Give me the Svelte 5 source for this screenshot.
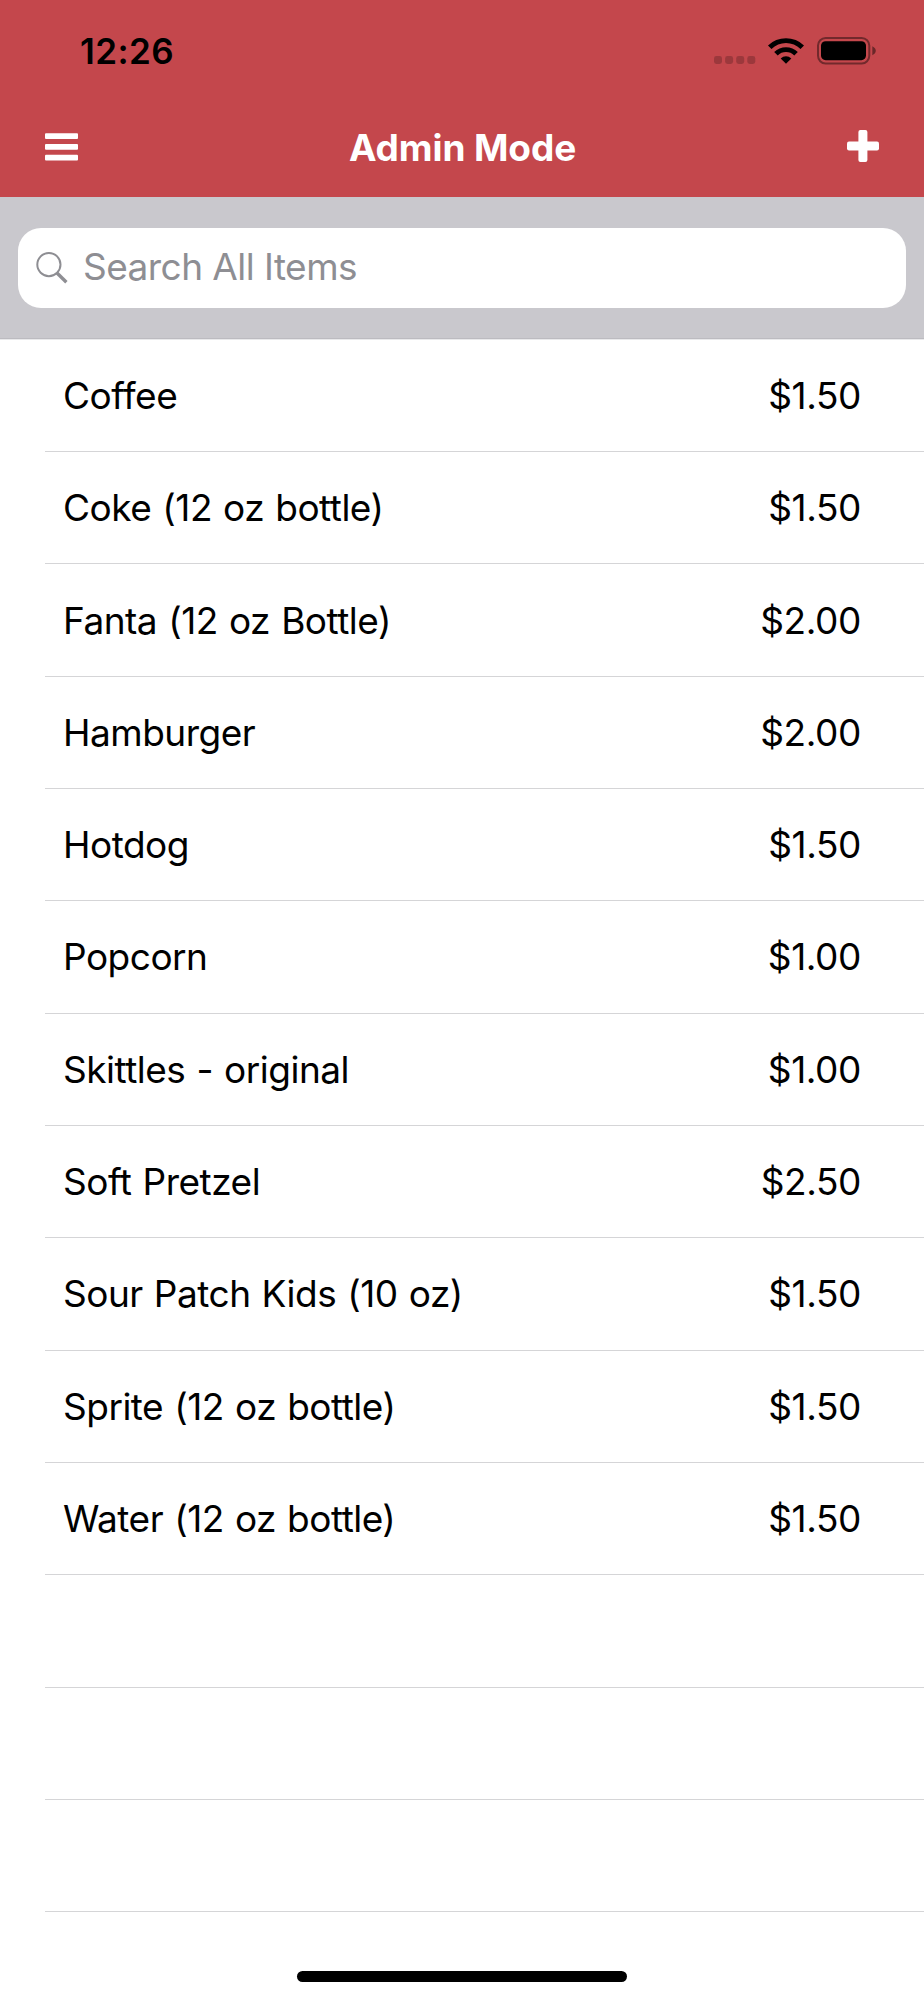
<script lang="ts">
  interface Item {
    name: string;
    price: number;
  }

  const items: Item[] = [
    { name: "Coffee", price: 1.5 },
    { name: "Coke (12 oz bottle)", price: 1.5 },
    { name: "Fanta (12 oz Bottle)", price: 2 },
    { name: "Hamburger", price: 2 },
    { name: "Hotdog", price: 1.5 },
    { name: "Popcorn", price: 1 },
    { name: "Skittles - original", price: 1 },
    { name: "Soft Pretzel", price: 2.5 },
    { name: "Sour Patch Kids (10 oz)", price: 1.5 },
    { name: "Sprite (12 oz bottle)", price: 1.5 },
    { name: "Water (12 oz bottle)", price: 1.5 },
  ];

  // Empty separators keep going below the last item.
  const EMPTY_ROWS = 3;

  let query = $state("");

  let visible = $derived(
    items.filter((i) => i.name.toLowerCase().includes(query.toLowerCase())),
  );
</script>

<div class="screen">
  <header class="top">
    <div class="status">
      <span class="time">12:26</span>
      <div class="indicators">
        <svg class="signal" width="42" height="8" viewBox="0 0 42 8" aria-hidden="true">
          <rect x="0" width="8" height="8" rx="2.4" />
          <rect x="11.1" width="8" height="8" rx="2.4" />
          <rect x="22.2" width="8" height="8" rx="2.4" />
          <rect x="33.3" width="8" height="8" rx="2.4" />
        </svg>
        <svg class="wifi" width="38" height="28" viewBox="0 0 38 28" aria-hidden="true">
          <path d="M1 8.6A25.5 25.5 0 0 1 37 8.6L33.5 12A20.6 20.6 0 0 0 4.5 12Z" />
          <path d="M7.2 15A16.8 16.8 0 0 1 30.8 15L27.3 18.4A11.8 11.8 0 0 0 10.7 18.4Z" />
          <path d="M13.7 21.4A7.6 7.6 0 0 1 24.3 21.4L19 26.7Z" />
        </svg>
        <svg class="battery" width="60" height="28" viewBox="0 0 60 28" aria-hidden="true">
          <rect x="1" y="1" width="51.3" height="25.4" rx="7.6" fill="none" stroke="#000" stroke-opacity=".42" stroke-width="2" />
          <rect x="4" y="4.2" width="45" height="19" rx="4.6" />
          <path d="M55.3 9.2Q58.8 10.8 58.8 13.7T55.3 18.2Z" fill-opacity=".45" />
        </svg>
      </div>
    </div>

    <nav class="bar">
      <button class="icon-btn" aria-label="menu">
        <svg width="33" height="28" viewBox="0 0 33 28" fill="#fff">
          <rect y="0.2" width="33" height="5.8" rx="1" />
          <rect y="11" width="33" height="5.8" rx="1" />
          <rect y="21.8" width="33" height="5.8" rx="1" />
        </svg>
      </button>
      <h1 class="title">Admin Mode</h1>
      <button class="icon-btn add" aria-label="add item">
        <svg width="32" height="32" viewBox="0 0 32 32" fill="#fff">
          <rect x="11.4" width="9" height="32" rx="2" />
          <rect y="11.4" width="32" height="9" rx="2" />
        </svg>
      </button>
    </nav>
  </header>

  <div class="search">
    <label class="field">
      <svg class="lens" width="32" height="33" viewBox="0 0 32 33" fill="none" stroke="#8e8e93" aria-hidden="true">
        <circle cx="12.9" cy="12.6" r="11.6" stroke-width="2" />
        <path d="M21 21L30.4 30.2" stroke-width="3.4" />
      </svg>
      <input class="input" placeholder="Search All Items" bind:value={query} />
    </label>
  </div>

  <ul class="list">
    {#each visible as item}
      <li class="row">
        <span class="name">{item.name}</span>
        <span class="price">${item.price.toFixed(2)}</span>
      </li>
    {/each}
    {#each { length: EMPTY_ROWS } as _}
      <li class="row"></li>
    {/each}
  </ul>

  <footer class="home">
    <div class="home-bar"></div>
  </footer>
</div>

<style>
  :global(body) {
    background: #fff;
  }
  .screen {
    display: flex;
    flex-direction: column;
    width: 924px;
    height: 2000px;
    overflow: hidden;
    box-sizing: border-box;
    background: #fff;
    color: #000;
    font-family: Inter, "Liberation Sans", sans-serif;
    font-size: 37px;
  }
  .top {
    height: 197px;
    flex: none;
    background: #c4474c;
  }
  .status {
    display: flex;
    justify-content: space-between;
    align-items: center;
    height: 102px;
    padding: 0 47px 0 80px;
    box-sizing: border-box;
  }
  .time {
    font-size: 35px;
    font-weight: 600;
    line-height: 40px;
    letter-spacing: 0.4px;
  }
  .indicators {
    display: flex;
    align-items: center;
    margin-bottom: 1px;
  }
  .signal {
    margin: 18px 11px 0 0;
    opacity: 0.2;
  }
  .wifi {
    margin-right: 12px;
  }
  .bar {
    display: flex;
    justify-content: space-between;
    align-items: center;
    height: 89px;
    padding: 0 45px;
  }
  .icon-btn {
    display: flex;
    padding: 0;
    border: 0;
    background: none;
  }
  .add {
    margin-bottom: 2px;
  }
  .title {
    margin: 2px 0 0;
    color: #fff;
    font-size: 37px;
    font-weight: 700;
    line-height: 44px;
    letter-spacing: -0.1px;
  }
  .search {
    flex: none;
    height: 141.7px;
    padding: 31px 18px 0;
    box-sizing: border-box;
    background: #c9c8cd;
    border-bottom: 1px solid #bcbbc0;
  }
  .field {
    display: flex;
    align-items: center;
    height: 80px;
    padding: 0 17px 0 18px;
    box-sizing: border-box;
    border-radius: 23px;
    background: #fff;
  }
  .lens {
    flex: none;
    margin-right: 15px;
  }
  .input {
    flex: 1;
    min-width: 0;
    padding: 0 0 4px;
    border: 0;
    outline: 0;
    background: none;
    color: #000;
    font: inherit;
    letter-spacing: -0.55px;
  }
  .input::placeholder {
    color: #8e8e93;
    opacity: 1;
  }
  .list {
    flex: none;
    margin: 0;
    padding: 0 0 0 45px;
    list-style: none;
    border-top: 1px solid #e9e9eb;
  }
  .row {
    display: flex;
    justify-content: space-between;
    align-items: center;
    height: 112.33px;
    padding: 0 63px 0 18px;
    box-sizing: border-box;
    border-bottom: 1px solid #d5d5d7;
  }
  .name {
    letter-spacing: -0.5px;
    word-spacing: 1.2px;
  }
  .price {
    letter-spacing: -0.4px;
  }
  .home {
    flex: 1;
    display: flex;
    justify-content: center;
    align-items: flex-end;
    padding-bottom: 18px;
  }
  .home-bar {
    width: 330px;
    height: 11px;
    border-radius: 6px;
    background: #000;
  }
</style>
